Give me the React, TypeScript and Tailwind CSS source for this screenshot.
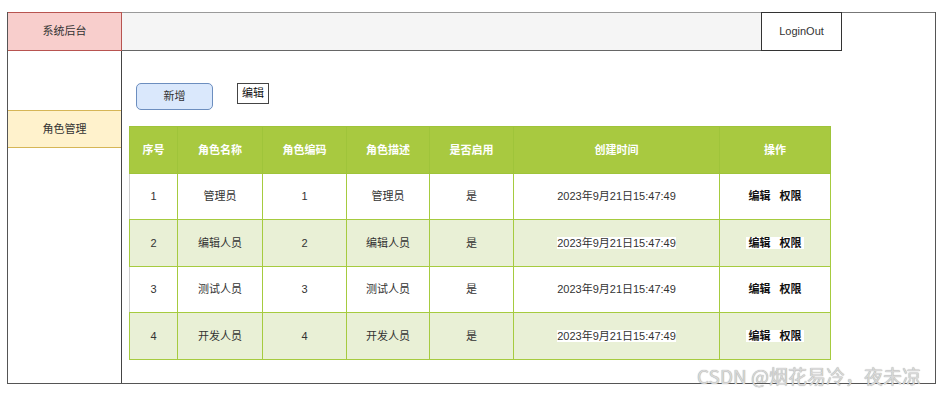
const rows = [
    { id: 1, name: '管理员', code: 1, desc: '管理员', hl: false },
    { id: 2, name: '编辑人员', code: 2, desc: '编辑人员', hl: true },
    { id: 3, name: '测试人员', code: 3, desc: '测试人员', hl: false },
    { id: 4, name: '开发人员', code: 4, desc: '开发人员', hl: true },
];

const headers = ['序号', '角色名称', '角色编码', '角色描述', '是否启用', '创建时间', '操作'];
const widths = ['w-[48px]', 'w-[85px]', 'w-[84px]', 'w-[83px]', 'w-[84px]', 'w-[206px]', 'w-[111px]'];

export default function App() {
    return (
        <div className="relative h-[396px] w-[943px] bg-white pt-[12px] pl-[7px] font-['Liberation_Sans','Noto_Sans_CJK_SC',sans-serif] text-[11px] text-[#333]">
            <div className="flex h-[372px] w-[929px] flex-col border-x border-b border-[#555]">
                {/* Top bar */}
                <div className="flex h-[39px] shrink-0">
                    <div className="flex w-[114px] items-center justify-center border-t border-r border-b border-[#b85450] bg-[#f8cecc]">
                        系统后台
                    </div>
                    <div className="w-[639px] border-y border-t-[#9a9a9a] border-b-[#666] bg-[#f5f5f5]" />
                    <div className="flex w-[81px] items-center justify-center border border-[#333] bg-white">LoginOut</div>
                    <div className="flex-1 border-t border-[#777]" />
                </div>

                <div className="flex flex-1">
                    {/* Sidebar */}
                    <div className="w-[114px] border-r border-[#444] pt-[59px]">
                        <div className="flex h-[38px] items-center justify-center border-y border-[#d6b656] bg-[#fff2cc]">
                            角色管理
                        </div>
                    </div>

                    {/* Content */}
                    <div className="flex-1 pt-[32px] pl-[7px]">
                        <div className="flex items-start pl-[7px]">
                            <button className="h-[27px] w-[77px] rounded-[5px] border border-[#6c8ebf] bg-[#dae8fc]">新增</button>
                            <span className="ml-[24px] flex h-[21px] w-[32px] items-center justify-center border border-[#444] text-[#111]">编辑</span>
                        </div>

                        <table className="mt-[16px] w-[701px] table-fixed border-collapse text-center">
                            <thead>
                                <tr className="h-[47px] bg-[#a8c940] font-bold text-white">
                                    {headers.map((h, i) => (
                                        <th key={h} className={`${widths[i]} border border-[#9fc43a] font-bold`}>{h}</th>
                                    ))}
                                </tr>
                            </thead>
                            <tbody>
                                {rows.map(r => (
                                    <tr key={r.id} className={`${r.id % 2 === 0 ? 'h-[47px] bg-[#e9f0d6]' : 'h-[46px] bg-white'}`}>
                                        <td className={`border border-[#a6cb3f] ${r.hl ? '' : 'border-l-[#cfcfcf]'}`}>{r.id}</td>
                                        <td className="border border-[#a6cb3f]">{r.name}</td>
                                        <td className="border border-[#a6cb3f]">{r.code}</td>
                                        <td className="border border-[#a6cb3f]">{r.desc}</td>
                                        <td className="border border-[#a6cb3f]">是</td>
                                        <td className="border border-[#a6cb3f]">
                                            <span className={r.hl ? 'bg-white' : ''}>2023年9月21日15:47:49</span>
                                        </td>
                                        <td className="border border-[#a6cb3f] font-bold text-[#111]">
                                            <span className={r.hl ? 'bg-white px-[2px]' : ''}>编辑&nbsp;&nbsp;&nbsp;权限</span>
                                        </td>
                                    </tr>
                                ))}
                            </tbody>
                        </table>
                    </div>
                </div>
            </div>

            {/* Watermark */}
            <div className="absolute top-[364px] left-[697px] font-['Noto_Sans_CJK_SC',sans-serif] text-[19px] leading-[24px] font-normal text-[#d8d8d8] [text-shadow:0_0_1px_#8a8a8a]">
                CSDN @烟花易冷，夜未凉
            </div>
        </div>
    );
}
